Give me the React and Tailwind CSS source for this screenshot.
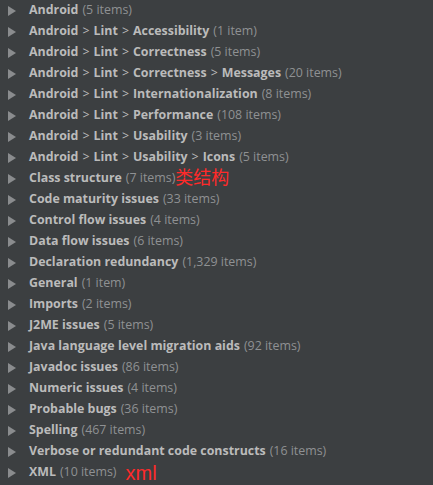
import React from "react";

const rows = [
  { parts: ["Android"], count: "(5 items)" },
  { parts: ["Android", "Lint", "Accessibility"], count: "(1 item)" },
  { parts: ["Android", "Lint", "Correctness"], count: "(5 items)" },
  { parts: ["Android", "Lint", "Correctness", "Messages"], count: "(20 items)" },
  { parts: ["Android", "Lint", "Internationalization"], count: "(8 items)" },
  { parts: ["Android", "Lint", "Performance"], count: "(108 items)" },
  { parts: ["Android", "Lint", "Usability"], count: "(3 items)" },
  { parts: ["Android", "Lint", "Usability", "Icons"], count: "(5 items)" },
  { parts: ["Class structure"], count: "(7 items)", note: "类结构" },
  { parts: ["Code maturity issues"], count: "(33 items)" },
  { parts: ["Control flow issues"], count: "(4 items)" },
  { parts: ["Data flow issues"], count: "(6 items)" },
  { parts: ["Declaration redundancy"], count: "(1,329 items)" },
  { parts: ["General"], count: "(1 item)" },
  { parts: ["Imports"], count: "(2 items)" },
  { parts: ["J2ME issues"], count: "(5 items)" },
  { parts: ["Java language level migration aids"], count: "(92 items)" },
  { parts: ["Javadoc issues"], count: "(86 items)" },
  { parts: ["Numeric issues"], count: "(4 items)" },
  { parts: ["Probable bugs"], count: "(36 items)" },
  { parts: ["Spelling"], count: "(467 items)" },
  { parts: ["Verbose or redundant code constructs"], count: "(16 items)" },
  { parts: ["XML"], count: "(10 items)", note: "xml", noteLatin: true },
];

function Arrow() {
  return (
    <svg width="8" height="10" viewBox="0 0 8 10" className="shrink-0">
      <polygon points="0,0 8,5 0,10" fill="#8a8c8e" />
    </svg>
  );
}

export default function App() {
  return (
    <div
      className="w-[433px] h-[485px] bg-[#3c3f41] overflow-hidden text-[12.4px]"
      style={{ fontFamily: '"Open Sans", "Noto Sans", sans-serif' }}
    >
      <div>
        {rows.map((r, i) => (
          <div key={i} className="h-[21px] flex items-center pl-[8px] whitespace-nowrap">
            <Arrow />
            <div className="ml-[13px] flex items-center">
              {r.parts.map((p, j) => (
                <React.Fragment key={j}>
                  {j > 0 && <span className="text-[#bbbbbb] mx-[4px]">&gt;</span>}
                  <span className="font-bold text-[#bbbbbb]">{p}</span>
                </React.Fragment>
              ))}
              <span className="ml-[4px] text-[#8f9193]">{r.count}</span>
              {r.note && (
                <span
                  className={
                    r.noteLatin
                      ? "ml-[9px] text-[20px] leading-none text-[#ff2a2a]"
                      : "ml-[0px] text-[18px] leading-none text-[#ff2a2a]"
                  }
                  style={{ fontFamily: '"Liberation Sans", "Noto Sans CJK SC", sans-serif' }}
                >
                  {r.note}
                </span>
              )}
            </div>
          </div>
        ))}
      </div>
    </div>
  );
}
